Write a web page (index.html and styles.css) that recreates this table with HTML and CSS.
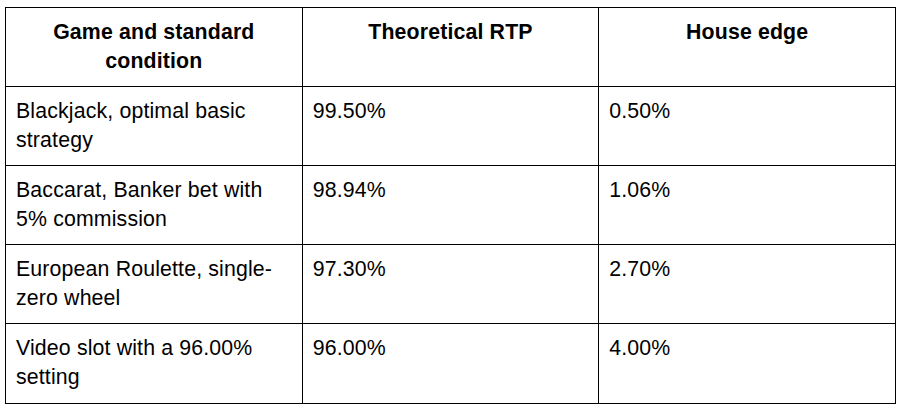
FILE: index.html
```html
<!DOCTYPE html>
<html>
<head>
<meta charset="utf-8">
<link rel="stylesheet" href="styles.css">
</head>
<body>
<table class="rtp">
  <thead>
    <tr>
      <th>Game and standard condition</th>
      <th>Theoretical RTP</th>
      <th>House edge</th>
    </tr>
  </thead>
  <tbody>
    <tr>
      <td>Blackjack, optimal basic strategy</td>
      <td>99.50%</td>
      <td>0.50%</td>
    </tr>
    <tr>
      <td>Baccarat, Banker bet with 5% commission</td>
      <td>98.94%</td>
      <td>1.06%</td>
    </tr>
    <tr>
      <td>European Roulette, single-zero wheel</td>
      <td>97.30%</td>
      <td>2.70%</td>
    </tr>
    <tr class="last">
      <td>Video slot with a 96.00% setting</td>
      <td>96.00%</td>
      <td>4.00%</td>
    </tr>
  </tbody>
</table>
</body>
</html>
```

FILE: styles.css
```css
html, body {
  margin: 0;
  padding: 0;
  background: #ffffff;
}

body {
  padding: 7px 0 0 5px;
}

.rtp {
  border-collapse: collapse;
  table-layout: fixed;
  width: 891px;
  font-family: "Liberation Sans", Arial, sans-serif;
  font-size: 21.3px;
  letter-spacing: 0.15px;
  line-height: 29px;
  color: #000000;
}

.rtp th,
.rtp td {
  border: 1px solid #000000;
  height: 79px;
  box-sizing: border-box;
  vertical-align: top;
  padding: 10px 10px 9px 10px;
  overflow: hidden;
}

.rtp th {
  font-weight: bold;
  text-align: center;
}

.rtp td {
  font-weight: normal;
  text-align: left;
}

.rtp tr.last td {
  height: 80px;
}
```
